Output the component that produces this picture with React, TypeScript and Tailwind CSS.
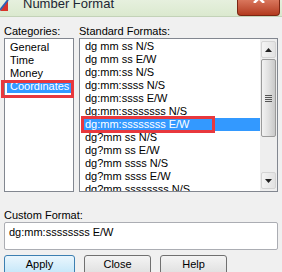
const formats = [
  "dg mm ss N/S",
  "dg mm ss E/W",
  "dg:mm:ss N/S",
  "dg:mm:ssss N/S",
  "dg:mm:ssss E/W",
  "dg:mm:ssssssss N/S",
  "dg:mm:ssssssss E/W",
  "dg?mm ss N/S",
  "dg?mm ss E/W",
  "dg?mm ssss N/S",
  "dg?mm ssss E/W",
  "dg?mm ssssssss N/S",
];

const categories = ["General", "Time", "Money", "Coordinates"];

function ScrollButton({ down = false }: { down?: boolean }) {
  return (
    <div className="flex h-[17px] items-center justify-center rounded-[2px] border border-[#d4d4d4] bg-linear-to-r from-[#f4f4f4] to-[#e2e2e2]">
      <svg width="7" height="4" viewBox="0 0 7 4">
        {down ? <polygon points="0,0 7,0 3.5,4" fill="#222" /> : <polygon points="0,4 7,4 3.5,0" fill="#222" />}
      </svg>
    </div>
  );
}

function Button({ label, primary = false, width }: { label: string; primary?: boolean; width: string }) {
  return (
    <div
      className={
        primary
          ? `flex h-[23px] ${width} justify-center rounded-[3px] border border-[#3c7fb1] bg-linear-to-b from-[#eaf6fd] to-[#bde4f8] pt-[2px]`
          : `flex h-[23px] ${width} justify-center rounded-[3px] border border-[#707070] bg-linear-to-b from-[#f4f4f4] to-[#dcdcdc] pt-[2px]`
      }
    >
      {label}
    </div>
  );
}

export default function App() {
  return (
    <div className="relative h-[272px] w-[282px] overflow-hidden bg-[#f0f0f0] font-['Liberation_Sans',Arial,sans-serif] text-[11px] leading-[13px] text-black">
      {/* title bar */}
      <div className="flex h-[17px] items-start border-b border-[#c3d2b8] bg-linear-to-b from-[#e6f0de] to-[#dbe9cf]">
        <svg width="9" height="12" viewBox="0 0 9 12" className="shrink-0">
          <polygon points="0,11 8,0 8,11" fill="#d8332a" />
          <line x1="0" y1="10" x2="8" y2="0" stroke="#2b63b8" strokeWidth="2" />
        </svg>
        <span className="-mt-[3px] ml-[14px] text-[13px] leading-[13px] text-[#1b2633]">Number Format</span>
        <div className="relative ml-auto mr-[2px] h-[16px] w-[43px] overflow-hidden rounded-b-[4px] border border-t-0 border-[#7a2613] bg-linear-to-b from-[#d9765c] to-[#b33a1e]">
          <svg width="12" height="10" viewBox="0 0 12 10" className="absolute left-[15px] -top-[7px]">
            <path d="M1 0 L11 10 M11 0 L1 10" stroke="#fff" strokeWidth="2.5" />
          </svg>
        </div>
      </div>

      <div className="px-[4px]">
        <div className="mt-[8px] flex gap-[5px]">
          <span className="w-[70px]">Categories:</span>
          <span>Standard Formats:</span>
        </div>

        <div className="flex h-[154px] gap-[5px]">
          <div className="w-[70px] border border-[#828790] bg-white pt-[2px]">
            {categories.map((c) => (
              <div
                key={c}
                className={
                  c === "Coordinates"
                    ? "ml-[2px] mr-[1px] h-[13px] bg-[#3399ff] pl-[3px] text-white"
                    : "ml-[2px] mr-[1px] h-[13px] pl-[3px]"
                }
              >
                {c}
              </div>
            ))}
          </div>

          <div className="flex flex-1 border border-[#828790] bg-white">
            <div className="flex-1 overflow-hidden pt-[1px]">
              {formats.map((f, i) => (
                <div
                  key={f}
                  className={
                    i === 6
                      ? "ml-[2px] h-[13px] whitespace-nowrap bg-[#3399ff] pl-[3px] text-white"
                      : "ml-[2px] h-[13px] whitespace-nowrap pl-[3px]"
                  }
                >
                  {f}
                </div>
              ))}
            </div>
            <div className="flex w-[17px] flex-col bg-[#eeeeee] px-[1px] py-[2px]">
              <ScrollButton />
              <div className="mt-[1px] flex h-[78px] items-center justify-center rounded-[2px] border border-[#9a9a9a] bg-linear-to-r from-[#f2f2f2] via-[#e0e0e0] to-[#c9c9c9]">
                <div className="flex flex-col gap-[1px]">
                  <div className="h-px w-[7px] bg-[#555]" />
                  <div className="h-px w-[7px] bg-[#555]" />
                  <div className="h-px w-[7px] bg-[#555]" />
                  <div className="h-px w-[7px] bg-[#555]" />
                </div>
              </div>
              <div className="flex-1" />
              <ScrollButton down />
            </div>
          </div>
        </div>

        <div className="mt-[17px]">Custom Format:</div>
        <div className="h-[28px] rounded-[2px] border border-[#abadb3] bg-white pl-[4px] pt-[3px]">dg:mm:ssssssss E/W</div>

        <div className="mt-[5px] flex gap-[9px]">
          <Button label="Apply" primary width="w-[71px]" />
          <Button label="Close" width="w-[67px]" />
          <Button label="Help" width="w-[67px]" />
        </div>
      </div>

      {/* red annotation boxes */}
      <div className="absolute left-[1px] top-[80px] h-[18px] w-[73px] border-[3px] border-[#e8383d]" />
      <div className="absolute left-[81px] top-[116px] h-[17px] w-[134px] border-[3px] border-[#e8383d]" />
    </div>
  );
}
